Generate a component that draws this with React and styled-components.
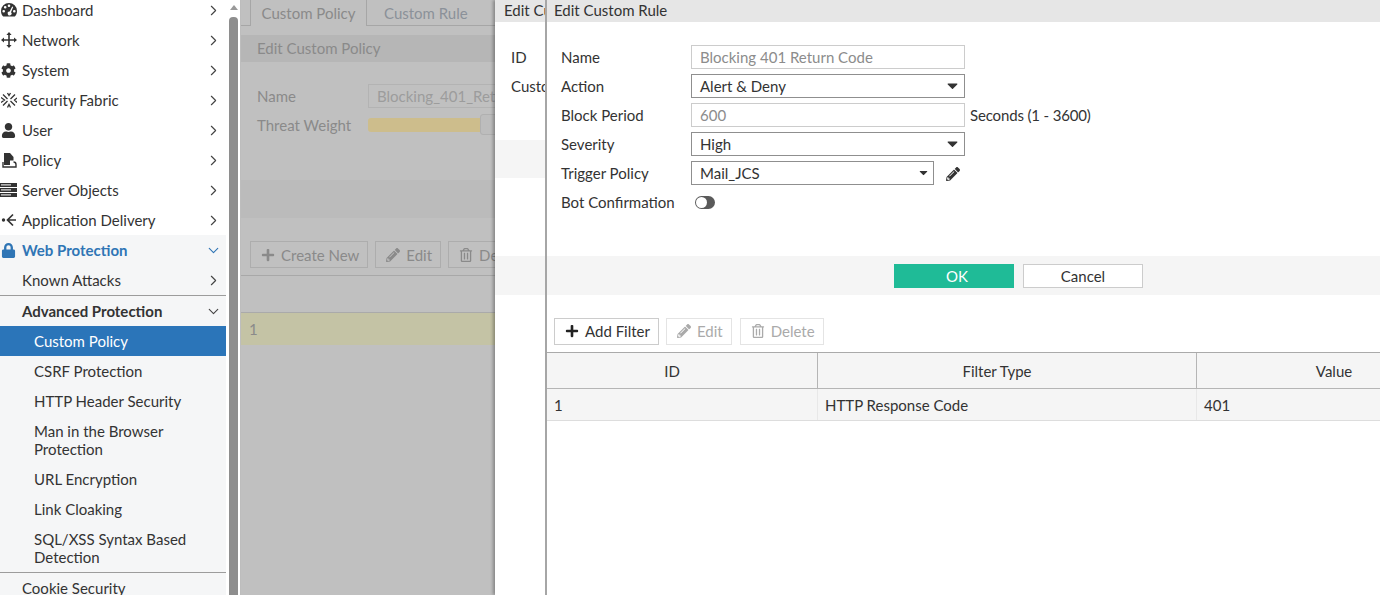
import React from "react";
import styled, { createGlobalStyle } from "styled-components";
import {
  FaCog,
  FaUser,
  FaLock,
  FaPencilAlt,
  FaRegTrashAlt,
  FaPlus,
  FaCaretDown,
} from "react-icons/fa";
import { LuChevronRight, LuChevronDown } from "react-icons/lu";

const Global = createGlobalStyle`
  html, body { margin: 0; padding: 0; height: 100%; overflow: hidden; background: #fff; }
  body { font-family: Lato, "Open Sans", sans-serif; font-size: 15px; color: #333; }
  * { box-sizing: border-box; }
`;

const Page = styled.div`
  display: flex;
  width: 1380px;
  height: 595px;
  overflow: hidden;
`;

/* ---------- left nav ---------- */
const Sidebar = styled.nav`
  width: 226px;
  height: 595px;
  overflow: hidden;
  flex: none;
`;
const NavList = styled.div`
  margin-top: -5px;
`;
const NavRow = styled.div`
  display: flex;
  align-items: center;
  height: ${(p) => (p.$tall ? "48px" : p.$rule ? "31px" : "30px")};
  padding-left: ${(p) => (p.$level === 2 ? "34px" : "22px")};
  padding-right: 4px;
  line-height: 18px;
  position: relative;
  color: ${(p) => (p.$active ? "#fff" : p.$blue ? "#2f75b5" : "#333")};
  background: ${(p) => (p.$active ? "#2b75b9" : p.$shade ? "#f5f6f7" : "#fff")};
  font-weight: ${(p) => (p.$bold ? 700 : 400)};
  border-top: ${(p) => (p.$rule ? "1px solid #9c9c9c" : "none")};
`;
const NavIcon = styled.span`
  position: absolute;
  left: 0;
  top: 0;
  bottom: 0;
  width: 17px;
  display: flex;
  align-items: center;
  justify-content: center;
  color: ${(p) => p.$color || "#333"};
  font-size: 15px;
`;
const NavLabel = styled.span`
  flex: 1;
  width: 150px;
`;
const Chevron = styled.span`
  display: flex;
  color: ${(p) => p.$color || "#444"};
  font-size: 17px;
  svg {
    stroke-width: 1.6;
  }
`;

const ScrollGutter = styled.div`
  width: 15px;
  flex: none;
  display: flex;
  padding-left: 3px;
  border-right: 1px solid #bdbdbd;
`;
const ScrollTrack = styled.div`
  width: 9px;
  height: 595px;
  display: flex;
  flex-direction: column;
  align-items: center;
`;
const ScrollArrow = styled.div`
  margin-top: 5px;
  width: 0;
  height: 0;
  border-left: 4px solid transparent;
  border-right: 4px solid transparent;
  border-bottom: 5px solid #9a9a9a;
`;
const ScrollThumb = styled.div`
  margin-top: 7px;
  width: 9px;
  flex: 1;
  border-radius: 4px 4px 0 0;
  background: #8e8e8e;
`;

/* ---------- dimmed page behind the slide-outs ---------- */
const Dimmed = styled.main`
  width: 254px;
  flex: none;
  overflow: hidden;
  background: #c0c0c0;
  color: #8a8a8a;
`;
const Tabs = styled.div`
  display: flex;
  height: 26px;
  padding-left: 9px;
  border-bottom: 1px solid #a6a6a6;
`;
const Tab = styled.div`
  display: flex;
  align-items: center;
  justify-content: center;
  height: ${(p) => (p.$current ? "26px" : "25px")};
  width: ${(p) => (p.$current ? "117px" : "auto")};
  padding: ${(p) => (p.$current ? "0" : "0 0 0 17px")};
  white-space: nowrap;
  color: ${(p) => (p.$current ? "#8a8a8a" : "#8b9199")};
  background: #c0c0c0;
  border-left: ${(p) => (p.$current ? "1px solid #a6a6a6" : "none")};
  border-right: ${(p) => (p.$current ? "1px solid #a6a6a6" : "none")};
`;
const DimTitle = styled.div`
  margin-top: 9px;
  height: 27px;
  padding: 0 0 2px 16px;
  display: flex;
  align-items: center;
  background: #b6b6b6;
`;
const DimForm = styled.div`
  padding: 19px 0 0 16px;
  height: 118px;
`;
const DimRow = styled.div`
  display: flex;
  align-items: center;
  height: 29px;
`;
const DimLabel = styled.span`
  width: 111px;
  flex: none;
`;
const DimInput = styled.div`
  width: 150px;
  height: 24px;
  flex: none;
  padding-left: 8px;
  line-height: 22px;
  white-space: nowrap;
  overflow: hidden;
  border: 1px solid #b3b3b3;
  color: #9c9c9c;
`;
const WeightBar = styled.div`
  width: 112px;
  height: 14px;
  flex: none;
  background: #cdbd8c;
  border-radius: 3px 0 0 3px;
`;
const WeightKnob = styled.div`
  width: 30px;
  height: 21px;
  flex: none;
  background: #bdbdbd;
  border: 1px solid #b0b0b0;
  border-radius: 3px;
`;
const DimBand = styled.div`
  height: 38px;
  background: #bbb;
`;
const DimToolbar = styled.div`
  display: flex;
  gap: 7px;
  margin-top: 23px;
  padding-left: 9px;
  height: 35px;
  border-bottom: 1px solid #a8a8a8;
`;
const DimButton = styled.div`
  display: flex;
  align-items: center;
  gap: 6px;
  height: 27px;
  padding: 0 8px 0 10px;
  border: 1px solid #adadad;
  white-space: nowrap;
  flex: none;
  svg {
    font-size: 14px;
  }
`;
const DimSpacer = styled.div`
  height: 36px;
`;
const DimDataRow = styled.div`
  height: 33px;
  padding-left: 8px;
  display: flex;
  align-items: center;
  background: #c4c3a5;
  border-top: 1px solid #aaa;
`;

/* ---------- slide-out panels ---------- */
const Panel = styled.section`
  flex: ${(p) => (p.$narrow ? "none" : "1")};
  width: ${(p) => (p.$narrow ? "50px" : "auto")};
  height: 595px;
  overflow: hidden;
  background: #fff;
  border-left: ${(p) => (p.$narrow ? "none" : "2px solid #a6a6a6")};
  box-shadow: ${(p) => (p.$narrow ? "-2px 0 3px rgba(0, 0, 0, 0.3)" : "none")};
`;
const PanelHead = styled.div`
  height: 22px;
  display: flex;
  align-items: center;
  padding: 0 0 3px ${(p) => (p.$narrow ? "9px" : "7px")};
  background: #e6e6e6;
  white-space: nowrap;
`;
const BackForm = styled.div`
  padding: 21px 0 0 16px;
  height: 118px;
  white-space: nowrap;
`;
const BackRow = styled.div`
  height: 29px;
  line-height: 29px;
`;
const Band = styled.div`
  height: ${(p) => p.$h || 39}px;
  background: #f5f5f5;
`;
const BackGap = styled.div`
  height: 78px;
`;

const Form = styled.div`
  padding: 20px 0 0 14px;
  height: 234px;
`;
const Row = styled.div`
  display: flex;
  align-items: center;
  height: 29px;
`;
const Label = styled.label`
  width: 130px;
  flex: none;
`;
const Input = styled.div`
  width: 274px;
  height: 24px;
  flex: none;
  padding-left: 8px;
  line-height: 22px;
  color: #8c8c8c;
  border: 1px solid #ccc;
`;
const Select = styled.div`
  width: ${(p) => p.$w || 274}px;
  height: 24px;
  flex: none;
  padding: 0 3px 0 8px;
  display: flex;
  align-items: center;
  justify-content: space-between;
  color: #333;
  border: 1px solid #8f8f8f;
  svg {
    font-size: ${(p) => p.$caret || 17}px;
    color: #333;
  }
`;
const Hint = styled.span`
  margin-left: 5px;
  letter-spacing: -0.15px;
`;
const EditIcon = styled.span`
  display: flex;
  margin: 2px 0 0 12px;
  font-size: 14px;
  color: #333;
`;
const Toggle = styled.span`
  display: block;
  width: 20px;
  height: 13px;
  margin: 2px 0 0 4px;
  border-radius: 7px;
  background: #5a5a5a;
  position: relative;
  &::after {
    content: "";
    position: absolute;
    left: 1px;
    top: 1px;
    width: 11px;
    height: 11px;
    border-radius: 50%;
    background: #fff;
  }
`;
const Footer = styled.div`
  height: 39px;
  background: #f5f5f5;
  display: flex;
  align-items: center;
  padding-left: 347px;
  gap: 9px;
`;
const ActionButton = styled.button`
  width: 120px;
  height: 24px;
  padding: 0 0 0 ${(p) => (p.$primary ? "6px" : "0")};
  font: inherit;
  color: ${(p) => (p.$primary ? "#fff" : "#333")};
  background: ${(p) => (p.$primary ? "#1fbb97" : "#fff")};
  border: 1px solid ${(p) => (p.$primary ? "#1fbb97" : "#ccc")};
`;
const Toolbar = styled.div`
  display: flex;
  gap: 7px;
  padding: 23px 0 0 7px;
  height: 57px;
`;
const ToolButton = styled.div`
  display: flex;
  align-items: center;
  gap: 6px;
  height: 27px;
  padding: 0 8px 2px 10px;
  margin-left: ${(p) => (p.$nudge ? "1px" : "0")};
  color: ${(p) => (p.$off ? "#aaa" : "#333")};
  border: 1px solid ${(p) => (p.$off ? "#e4e4e4" : "#ccc")};
  svg {
    font-size: 14px;
    color: ${(p) => (p.$off ? "#aaa" : "#222")};
  }
`;
const Table = styled.div`
  border-top: 1px solid #aaa;
  width: 944px;
`;
const HeadRow = styled.div`
  display: grid;
  grid-template-columns: 270px 379px 295px;
  height: 36px;
  background: #f5f5f5;
  border-bottom: 1px solid #b5b5b5;
`;
const HeadCell = styled.div`
  display: flex;
  align-items: center;
  justify-content: center;
  padding-right: 20px;
  border-left: ${(p) => (p.$first ? "none" : "1px solid #b5b5b5")};
`;
const DataRow = styled.div`
  display: grid;
  grid-template-columns: 270px 379px 295px;
  height: 32px;
  background: #f5f5f5;
  border-bottom: 1px solid #ddd;
`;
const DataCell = styled.div`
  display: flex;
  align-items: center;
  padding-left: 7px;
  border-left: ${(p) => (p.$first ? "none" : "1px solid #e8e8e8")};
`;

/* drawings with no matching icon in the packages */
const GaugeIcon = () => (
  <svg width="16" height="14" viewBox="0 0 16 14">
    <path
      fillRule="evenodd"
      fill="#333"
      d="M8 0a8 8 0 0 1 8 8c0 2.4-.9 4.4-2.2 5.6H2.2C.9 12.4 0 10.4 0 8a8 8 0 0 1 8-8ZM4.2 3a1.3 1.3 0 1 0 0 2.6 1.3 1.3 0 0 0 0-2.6ZM8 1.4a1.3 1.3 0 1 0 0 2.6 1.3 1.3 0 0 0 0-2.6ZM2.7 7a1.3 1.3 0 1 0 0 2.6 1.3 1.3 0 0 0 0-2.6ZM13.3 7a1.3 1.3 0 1 0 0 2.6 1.3 1.3 0 0 0 0-2.6ZM11.2 3.6 8.7 8.6a1.9 1.9 0 1 0 1.3.6l2.2-5.2Z"
    />
  </svg>
);
const MoveIcon = () => (
  <svg width="16" height="16" viewBox="0 0 16 16" fill="#333">
    <path d="M8 0 5.4 3h1.8v4.2H3V5.4L0 8l3 2.6V8.8h4.2V13H5.4L8 16l2.6-3H8.8V8.8H13v1.8L16 8l-3-2.6v1.8H8.8V3h1.8Z" />
  </svg>
);
const FabricIcon = () => (
  <svg width="16" height="16" viewBox="0 0 16 16" fill="none" stroke="#333" strokeWidth="1.3">
    <path d="M2 2.5 6.5 7M9.5 9l4.5 4.5M14 2.5 9.5 7M6.5 9 2 13.5M0 5.5 3.5 8 0 10.5M16 6l-2.5 2 2.5 2.5M6.5 1 8 3.5 9.5 1M6.5 15.5 8 12.5l1.5 3" />
  </svg>
);
const PolicyIcon = () => (
  <svg width="16" height="15" viewBox="0 0 16 15">
    <path fill="#333" d="M3 0h6l3.5 4v3.5H9V12H3Z" />
    <path fill="none" stroke="#333" strokeWidth="1.4" d="M2 9v5h13v-2.5c0-1.5-1-2.5-2.5-2.5" />
  </svg>
);
const ServerIcon = () => (
  <svg width="17" height="14" viewBox="0 0 17 14">
    <path fill="#333" d="M0 0h17v4H0ZM0 5h17v4H0ZM0 10h17v4H0Z" />
    <path fill="#d9d9d9" d="M1 1.3h10v1.3H1ZM1 6.3h10v1.3H1ZM1 11.3h10v1.3H1Z" />
  </svg>
);
const DeliveryIcon = () => (
  <svg width="16" height="14" viewBox="0 0 16 14" fill="none" stroke="#333" strokeWidth="1.7">
    <path d="M12 1.5 6.5 7l5.5 5.5M6.5 7H15" />
    <circle cx="2.5" cy="7" r="1.7" fill="#333" stroke="none" />
  </svg>
);

const nav = [
  { label: "Dashboard", icon: <GaugeIcon /> },
  { label: "Network", icon: <MoveIcon /> },
  { label: "System", icon: <FaCog /> },
  { label: "Security Fabric", icon: <FabricIcon /> },
  { label: "User", icon: <FaUser /> },
  { label: "Policy", icon: <PolicyIcon /> },
  { label: "Server Objects", icon: <ServerIcon /> },
  { label: "Application Delivery", icon: <DeliveryIcon /> },
];
const subNav = [
  { label: "Custom Policy", active: true },
  { label: "CSRF Protection" },
  { label: "HTTP Header Security" },
  { label: "Man in the Browser Protection", tall: true },
  { label: "URL Encryption" },
  { label: "Link Cloaking" },
  { label: "SQL/XSS Syntax Based Detection", tall: true },
];

const App = () => {
  return (
    <Page>
      <Global />
      <Sidebar>
        <NavList>
          {nav.map((item) => (
            <NavRow key={item.label}>
              <NavIcon>{item.icon}</NavIcon>
              <NavLabel>{item.label}</NavLabel>
              <Chevron>
                <LuChevronRight />
              </Chevron>
            </NavRow>
          ))}
          <NavRow $shade $blue $bold>
            <NavIcon $color="#2f75b5">
              <FaLock />
            </NavIcon>
            <NavLabel>Web Protection</NavLabel>
            <Chevron $color="#2f75b5">
              <LuChevronDown />
            </Chevron>
          </NavRow>
          <NavRow $shade>
            <NavLabel>Known Attacks</NavLabel>
            <Chevron>
              <LuChevronRight />
            </Chevron>
          </NavRow>
          <NavRow $shade $bold $rule>
            <NavLabel>Advanced Protection</NavLabel>
            <Chevron>
              <LuChevronDown />
            </Chevron>
          </NavRow>
          {subNav.map((item) => (
            <NavRow key={item.label} $level={2} $shade $active={item.active} $tall={item.tall}>
              <NavLabel>{item.label}</NavLabel>
            </NavRow>
          ))}
          <NavRow $shade $rule>
            <NavLabel>Cookie Security</NavLabel>
          </NavRow>
        </NavList>
      </Sidebar>
      <ScrollGutter>
        <ScrollTrack>
          <ScrollArrow />
          <ScrollThumb />
        </ScrollTrack>
      </ScrollGutter>

      <Dimmed>
        <Tabs>
          <Tab $current>Custom Policy</Tab>
          <Tab>Custom Rule</Tab>
        </Tabs>
        <DimTitle>Edit Custom Policy</DimTitle>
        <DimForm>
          <DimRow>
            <DimLabel>Name</DimLabel>
            <DimInput>Blocking_401_Return</DimInput>
          </DimRow>
          <DimRow>
            <DimLabel>Threat Weight</DimLabel>
            <WeightBar />
            <WeightKnob />
          </DimRow>
        </DimForm>
        <DimBand />
        <DimToolbar>
          <DimButton>
            <FaPlus />
            Create New
          </DimButton>
          <DimButton>
            <FaPencilAlt />
            Edit
          </DimButton>
          <DimButton>
            <FaRegTrashAlt />
            Delete
          </DimButton>
        </DimToolbar>
        <DimSpacer />
        <DimDataRow>1</DimDataRow>
      </Dimmed>

      <Panel $narrow>
        <PanelHead $narrow>Edit Custom Rule</PanelHead>
        <BackForm>
          <BackRow>ID</BackRow>
          <BackRow>Custom Rule</BackRow>
        </BackForm>
        <Band $h={38} />
        <BackGap />
        <Band />
      </Panel>

      <Panel>
        <PanelHead>Edit Custom Rule</PanelHead>
        <Form>
          <Row>
            <Label>Name</Label>
            <Input>Blocking 401 Return Code</Input>
          </Row>
          <Row>
            <Label>Action</Label>
            <Select>
              Alert &amp; Deny
              <FaCaretDown />
            </Select>
          </Row>
          <Row>
            <Label>Block Period</Label>
            <Input>600</Input>
            <Hint>Seconds (1 - 3600)</Hint>
          </Row>
          <Row>
            <Label>Severity</Label>
            <Select>
              High
              <FaCaretDown />
            </Select>
          </Row>
          <Row>
            <Label>Trigger Policy</Label>
            <Select $w={243} $caret={13}>
              Mail_JCS
              <FaCaretDown />
            </Select>
            <EditIcon>
              <FaPencilAlt />
            </EditIcon>
          </Row>
          <Row>
            <Label>Bot Confirmation</Label>
            <Toggle />
          </Row>
        </Form>
        <Footer>
          <ActionButton $primary>OK</ActionButton>
          <ActionButton>Cancel</ActionButton>
        </Footer>
        <Toolbar>
          <ToolButton>
            <FaPlus />
            Add Filter
          </ToolButton>
          <ToolButton $off>
            <FaPencilAlt />
            Edit
          </ToolButton>
          <ToolButton $off $nudge>
            <FaRegTrashAlt />
            Delete
          </ToolButton>
        </Toolbar>
        <Table>
          <HeadRow>
            <HeadCell $first>ID</HeadCell>
            <HeadCell>Filter Type</HeadCell>
            <HeadCell>Value</HeadCell>
          </HeadRow>
          <DataRow>
            <DataCell $first>1</DataCell>
            <DataCell>HTTP Response Code</DataCell>
            <DataCell>401</DataCell>
          </DataRow>
        </Table>
      </Panel>
    </Page>
  );
};

export default App;
